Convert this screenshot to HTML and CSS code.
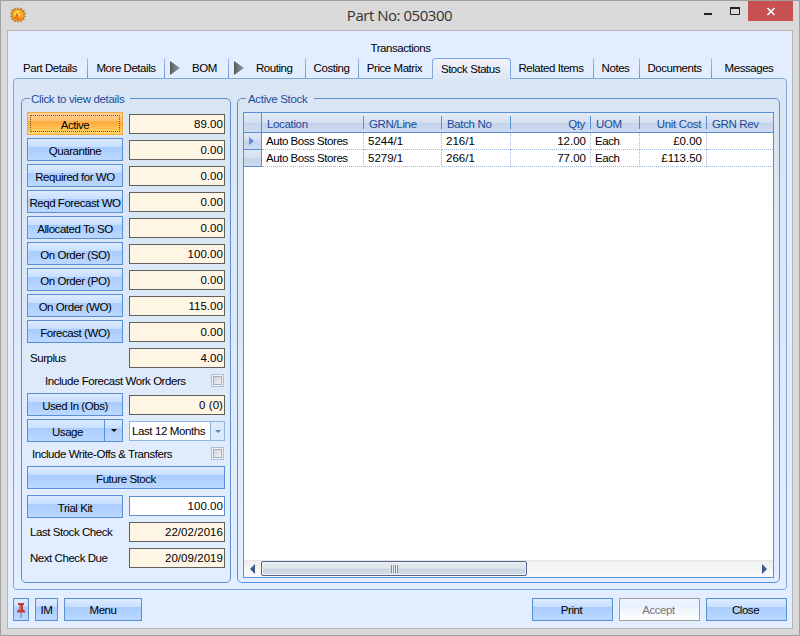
FILE: index.html
```html
<!DOCTYPE html>
<html lang="en">
<head>
<meta charset="utf-8">
<title>Part No: 050300</title>
<link rel="stylesheet" href="styles.css">
</head>
<body>
<div class="window">
  <header class="titlebar">
    <svg class="app-icon" width="16" height="16" viewBox="0 0 16 16">
      <path d="M8 .5l1.3 2L11.5 1l.4 2.4 2.5-.2-.8 2.2 2.2.9-1.8 1.5 1.7 1.7-2.2.8.8 2.3-2.4-.2-.4 2.5-2.1-1.5-1.3 2.1-1.5-2-2.2 1.3-.3-2.5-2.5.2.8-2.3L.3 9.3 2 7.7.3 6.1l2.200-.9-.8-2.400 2.500.3L4.800.9l2 1.500z" fill="#e8941b" stroke="#8a5a2a" stroke-width=".5"/>
      <circle cx="8" cy="8" r="5.200" fill="#ffa81c"/>
      <path d="M3.500 9.500a4.800 4.800 0 0 0 8.500 1L8.500 11z" fill="#f0641a"/>
      <path d="M4 6l3-2.500 3 1-3 3-3 1.500z" fill="#ffd84a"/>
      <path d="M7 6l2 2-2 2.500-1.500-2z" fill="#e8601a"/>
      <circle cx="9" cy="7.500" r="1.100" fill="#fff3c8"/>
    </svg>
    <h1 class="title">Part No: 050300</h1>
    <div class="controls">
      <svg width="46" height="20" viewBox="0 0 46 20"><path d="M2 12h8v2H2z" fill="#222"/><path d="M28.500 7v6.500h9V7" fill="none" stroke="#222"/><path d="M28 6h10v2H28z" fill="#222"/></svg>
      <svg class="close" width="45" height="20" viewBox="0 0 45 20"><path d="M19.500 7l7 7m0-7l-7 7" stroke="#fff" stroke-width="1.700"/></svg>
    </div>
  </header>

  <main class="client">
    <div class="tab-heading">Transactions</div>
    <nav class="tabs">
      <span class="tab t1">Part Details</span>
      <span class="tab t2">More Details</span>
      <span class="tab t3 flagged"><i class="flag"></i>BOM</span>
      <span class="tab t4 flagged"><i class="flag"></i>Routing</span>
      <span class="tab t5">Costing</span>
      <span class="tab t6">Price Matrix</span>
      <span class="tab t7 current">Stock Status</span>
      <span class="tab t8">Related Items</span>
      <span class="tab t9">Notes</span>
      <span class="tab t10">Documents</span>
      <span class="tab t11">Messages</span>
    </nav>

    <section class="panel">
      <fieldset class="group summary">
        <legend>Click to view details</legend>
        <div class="row"><div class="btn active">Active</div><div class="field">89.00</div></div>
        <div class="row"><div class="btn">Quarantine</div><div class="field">0.00</div></div>
        <div class="row"><div class="btn">Required for WO</div><div class="field">0.00</div></div>
        <div class="row"><div class="btn">Reqd Forecast WO</div><div class="field">0.00</div></div>
        <div class="row"><div class="btn">Allocated To SO</div><div class="field">0.00</div></div>
        <div class="row"><div class="btn">On Order (SO)</div><div class="field">100.00</div></div>
        <div class="row"><div class="btn">On Order (PO)</div><div class="field">0.00</div></div>
        <div class="row"><div class="btn">On Order (WO)</div><div class="field">115.00</div></div>
        <div class="row"><div class="btn">Forecast (WO)</div><div class="field">0.00</div></div>
        <div class="row"><div class="label">Surplus</div><div class="field">4.00</div></div>
        <div class="check first"><span>Include Forecast Work Orders</span><i class="box"></i></div>
        <div class="row"><div class="btn">Used In (Obs)</div><div class="field">0 (0)</div></div>
        <div class="row">
          <div class="btn split"><span>Usage</span><i class="drop"></i></div>
          <div class="combo"><span>Last 12 Months</span><i class="drop"></i></div>
        </div>
        <div class="check second"><span>Include Write-Offs &amp; Transfers</span><i class="box"></i></div>
        <div class="btn wide">Future Stock</div>
        <div class="row kit"><div class="btn">Trial Kit</div><div class="field editable">100.00</div></div>
        <div class="row"><div class="label">Last Stock Check</div><div class="field">22/02/2016</div></div>
        <div class="row"><div class="label">Next Check Due</div><div class="field">20/09/2019</div></div>
      </fieldset>

      <fieldset class="group stock">
        <legend>Active Stock</legend>
        <div class="grid">
          <div class="grid-row head"><b class="handle"></b><span>Location</span><span>GRN/Line</span><span>Batch No</span><span class="num">Qty</span><span>UOM</span><span class="num">Unit Cost</span><span>GRN Rev</span></div>
          <div class="grid-row"><b class="handle selected"></b><span>Auto Boss Stores</span><span class="digits">5244/1</span><span class="digits">216/1</span><span class="num">12.00</span><span>Each</span><span class="num">£0.00</span><span></span></div>
          <div class="grid-row"><b class="handle"></b><span>Auto Boss Stores</span><span class="digits">5279/1</span><span class="digits">266/1</span><span class="num">77.00</span><span>Each</span><span class="num">£113.50</span><span></span></div>
          <div class="scrollbar">
            <i class="arrow left"></i>
            <div class="thumb"><i class="grip"></i></div>
            <i class="arrow right"></i>
          </div>
        </div>
      </fieldset>
    </section>

    <footer class="actions">
      <div class="btn pin">
        <svg width="10" height="17" viewBox="0 0 10 17"><path d="M5 10v6" stroke="#8798a8" stroke-width="1.500"/><path d="M2 1h6v2H7v4l2 2v1.500H1V9l2-2V3H2z" fill="#c9383e"/><path d="M4 3v5" stroke="#f3a3a3"/></svg>
      </div>
      <div class="btn im">IM</div>
      <div class="btn menu">Menu</div>
      <span class="spacer"></span>
      <div class="btn action">Print</div>
      <div class="btn action disabled">Accept</div>
      <div class="btn action">Close</div>
    </footer>
  </main>
</div>
</body>
</html>
```
FILE: styles.css
```css
* { box-sizing: border-box; }

body {
  margin: 0;
  font: 11.5px/13px "Liberation Sans", Arial, sans-serif;
  letter-spacing: -0.45px;
  color: #000;
}

.window {
  width: 800px;
  height: 636px;
  padding: 0 6px;
  background: #d9d9d9;
  border: 1px solid #a0a0a0;
}

.titlebar {
  display: flex;
  height: 29px;
}
.app-icon { margin: 6px 0 0 3px; }
.title {
  flex: 1;
  margin: 0 0 0 71px;
  font: 15px/29px "Open Sans", sans-serif;
  letter-spacing: -0.47px;
  text-align: center;
  color: #333;
}
.controls { display: flex; }
.close { background: #c75050; }

.client {
  height: 599px;
  background: #e2eeff;
  border: 1px solid #b4b4b4;
  padding: 0 5px;
}
.tab-heading {
  height: 27px;
  padding: 11px 0 0 1px;
  text-align: center;
}

.tabs { display: flex; height: 20px; }
.tab {
  display: flex;
  align-items: center;
  justify-content: center;
  border-right: 1px solid;
  border-image: linear-gradient(#a9c4ea, #5e8fd0) 1;
  white-space: nowrap;
}
.t1 { width: 75px; }
.t2 { width: 77px; }
.t3 { width: 64px; }
.t4 { width: 77px; }
.t5 { width: 53px; padding-right: 1px; }
.t6 { width: 73px; border: 0; padding-right: 2px; }
.t7 { width: 79px; }
.t8 { width: 83px; padding-right: 2px; }
.t9 { width: 46px; padding-right: 2px; }
.t10 { width: 72px; padding-right: 2px; }
.t11 { width: 75px; border: 0; padding-right: 1px; }
.flagged { justify-content: flex-start; padding-left: 5px; }
.flag {
  width: 10px;
  height: 14px;
  margin-right: 12px;
  background: linear-gradient(90deg, #505c60, #9a9da0);
  clip-path: polygon(0 0, 100% 50%, 0 100%);
}
.current {
  height: 21px;
  z-index: 1;
  padding: 1px 2px 0 0;
  background: linear-gradient(#f3f3fd, #dee7f5);
  border: 1px solid #7fa9e0;
  border-bottom: 0;
  border-image: none;
  border-radius: 4px 4px 0 0;
}

.panel {
  display: flex;
  align-items: flex-start;
  gap: 6px;
  height: 512px;
  padding: 13px 6px 0 7px;
  background: linear-gradient(#dae5f4, #dde8f8 50%, #e2eeff 85%);
  border: 1px solid #7fa5dc;
  border-radius: 4px;
}

.group {
  height: 491px;
  min-width: 0;
  margin: 0;
  padding: 7px 5px 0;
  border: 1px solid #5b8fd3;
  border-radius: 5px;
}
.group legend {
  height: 13px;
  margin-left: 3px;
  padding: 0 5px 0 1px;
  color: #1c4b9b;
  line-height: 15px;
  letter-spacing: -0.33px;
  white-space: nowrap;
}
.summary { width: 210px; }
.stock { width: 543px; }
.summary legend { width: 100px; }
.stock legend { width: 68px; padding-left: 2px; }

.row {
  display: grid;
  grid-template-columns: 96px 96px;
  gap: 6px;
  height: 26px;
  align-items: start;
}
.btn {
  display: flex;
  align-items: center;
  justify-content: center;
  height: 23px;
  padding-top: 3px;
  border: 1px solid #5b8fd3;
  background: linear-gradient(#dcebff, #c8dfff 38%, #a9cdff 40%, #bbd8ff);
  white-space: nowrap;
}
.btn.active {
  border-color: #f9a63b;
  outline: 1px dotted #6b5a3a;
  outline-offset: -4px;
  background: linear-gradient(#ffd29a, #ffbd6b 38%, #ffa938 42%, #ffd66b);
}
.field {
  height: 20px;
  margin-top: 2px;
  padding: 3px 1px 0 0;
  border: 1px solid #5f5f5f;
  background: #fff5e4;
  text-align: right;
  letter-spacing: 0.05px;
}
.label { padding: 6px 0 0 3px; white-space: nowrap; }
.check {
  display: flex;
  align-items: center;
  justify-content: space-between;
  padding-right: 1px;
  white-space: nowrap;
}
.check.first { height: 13px; margin: 2px 0 6px; padding-left: 18px; }
.check.second { height: 13px; margin: 2px 0 6px; padding-left: 5px; }
.check span { padding-top: 2px; }
.box {
  width: 13px;
  height: 13px;
  border: 1px solid #a9bfdf;
  background: linear-gradient(135deg, #c8ccd4, #fafafa);
  box-shadow: inset 0 0 0 1px #eef3fa, inset 0 0 0 2px #a9adb5;
}
.wide { width: 198px; }
.kit { margin-top: 6px; height: 25px; }
.kit .field { margin-top: 1px; }
.field.editable { background: #fff; border-color: #5b8fd3; }

.split { padding: 0; align-items: stretch; }
.split span { flex: 1; padding: 6px 0 0 3px; text-align: center; }
.split .drop { width: 18px; border-left: 1px solid #5b8fd3; }
.drop { display: flex; align-items: center; justify-content: center; }
.drop::after {
  content: "";
  border: solid transparent;
  border-width: 3px 3px 0;
  border-top-color: #000;
}
.combo {
  display: flex;
  height: 20px;
  margin-top: 2px;
  border: 1px solid #8fb3e4;
  background: #fff;
}
.combo span { flex: 1; padding: 3px 0 0 2px; white-space: nowrap; letter-spacing: -0.4px; }
.combo .drop { width: 14px; background: #dbe9fb; border-left: 1px solid #8fb3e4; }
.combo .drop::after { border-top-color: #5b84bd; }

.grid {
  display: flex;
  flex-direction: column;
  height: 466px;
  width: 531px;
  border: 1px solid #5b8fd3;
  background: #fff;
}
.grid-row {
  display: grid;
  grid-template-columns: 18px 102px 78px 69px 80px 49px 67px 66px;
  height: 17px;
}
.grid-row span {
  padding: 2px 4px 0;
  border-right: 1px dotted #9bb7d9;
  border-bottom: 1px dotted #9bb7d9;
  white-space: nowrap;
}
.grid-row span:last-child { border-right: 0; }
.grid-row .digits, .grid-row .num { letter-spacing: 0; }
.grid-row .num { text-align: right; }
.handle {
  display: flex;
  align-items: center;
  padding-left: 5px;
  border-right: 1px solid #5b8fd3;
  border-bottom: 1px solid #5b8fd3;
  background: linear-gradient(#dfe8f5, #d3dff0 50%, #c3d3ea 55%, #cedcef);
}
.selected::after {
  content: "";
  border: solid transparent;
  border-width: 4px 0 4px 5px;
  border-left-color: #5b8fd3;
}
.head {
  height: 20px;
  color: #1c4b9b;
  background: linear-gradient(#e3ebf6, #d5e0f0 50%, #c3d3ea 55%, #cedcef);
  border-bottom: 1px solid #5b8fd3;
}
.head .handle { border-bottom: 0; }
.head span {
  height: 13px;
  margin-top: 3px;
  padding: 2px 5px 0;
  line-height: 12px;
  letter-spacing: -0.35px;
  border-right: 1px solid #5b8fd3;
  border-bottom: 0;
}
.grid-row.head .num { letter-spacing: -0.35px; }

.scrollbar {
  display: flex;
  align-items: center;
  height: 17px;
  margin-top: auto;
  padding: 0 6px 1px;
  background: linear-gradient(#f0f0f0, #fafafa);
  border-top: 1px solid #e6e6e6;
}
.arrow { border: solid transparent; border-width: 5px 0; }
.arrow.left { border-right: 5px solid #40588c; }
.arrow.right { border-left: 5px solid #40588c; margin-left: auto; }
.thumb {
  display: flex;
  align-items: center;
  justify-content: center;
  width: 266px;
  height: 15px;
  margin-left: 6px;
  border: 1px solid #52658f;
  border-radius: 2px;
  background: linear-gradient(#e6ebef, #dfe5ec 48%, #ccd5e5 52%, #d5dce9);
  box-shadow: inset 0 0 0 1px #edf1f6;
}
.grip {
  width: 7px;
  height: 8px;
  background: repeating-linear-gradient(90deg, #858b96 0 1px, #eef1f5 1px 2px);
}

.actions { display: flex; gap: 6px; margin-top: 8px; }
.actions .btn { padding-top: 1px; }
.actions .action { padding-right: 2px; }
.spacer { flex: 1; }
.pin { width: 16px; }
.im { width: 23px; }
.menu { width: 78px; }
.action { width: 81px; }
.btn.disabled {
  color: #777;
  border-color: #a0a0a0;
  background: linear-gradient(#eef5ff, #e5f0ff 38%, #edf5ff 42%, #fff);
}
```
